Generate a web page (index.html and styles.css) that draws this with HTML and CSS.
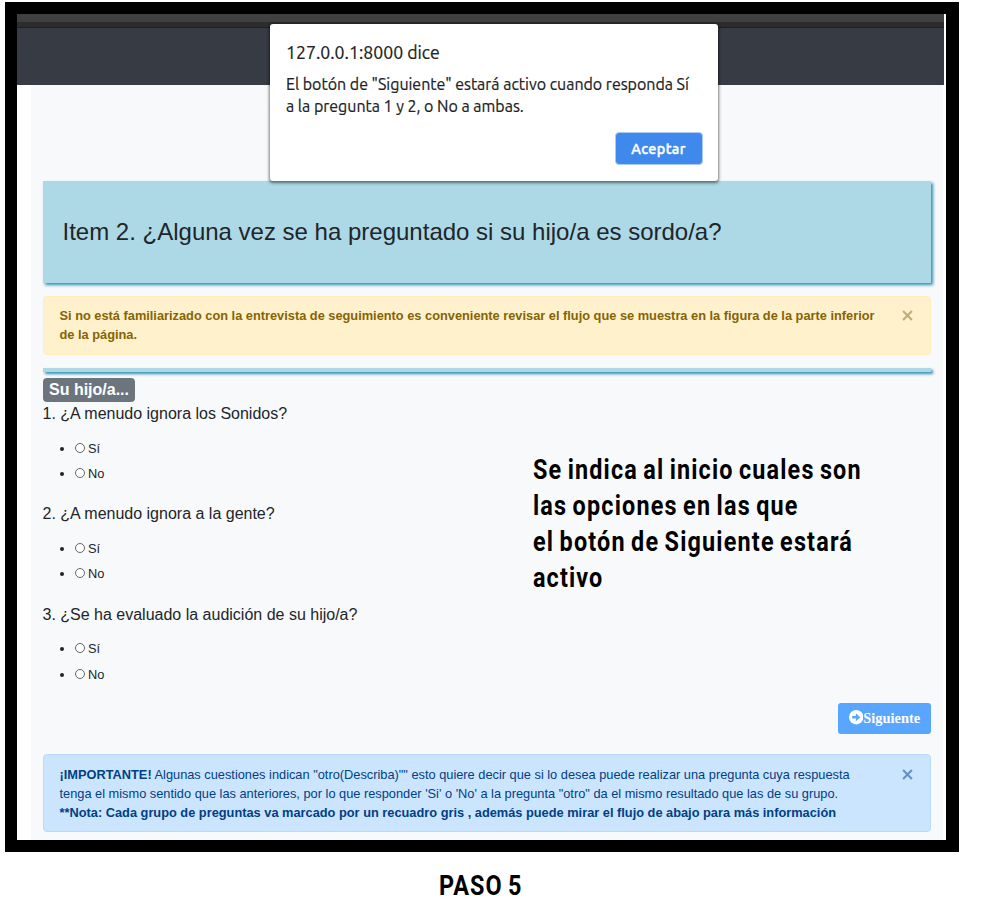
FILE: index.html
```html
<!DOCTYPE html>
<html lang="es">
<head>
<meta charset="utf-8">
<title>Paso 5</title>
<link rel="stylesheet" href="styles.css">
</head>
<body>
<div class="frame">
  <div class="chrome"></div>
  <div class="navbar"></div>
  <main class="content">
    <h1 class="title">Item 2. ¿Alguna vez se ha preguntado si su hijo/a es sordo/a?</h1>
    <div class="alert warning">
      <p><b>Si no está familiarizado con la entrevista de seguimiento es conveniente revisar el flujo que se muestra en la figura de la parte inferior<br>de la página.</b></p>
      <span class="close"><svg viewBox="0 0 10 10"><path d="M1 1L9 9M9 1L1 9"/></svg></span>
    </div>
    <div class="rule"></div>
    <span class="badge">Su hijo/a...</span>
    <section class="question">
      <h2>1. ¿A menudo ignora los Sonidos?</h2>
      <ul><li><label><i class="radio"></i>Sí</label></li><li><label><i class="radio"></i>No</label></li></ul>
    </section>
    <section class="question">
      <h2>2. ¿A menudo ignora a la gente?</h2>
      <ul><li><label><i class="radio"></i>Sí</label></li><li><label><i class="radio"></i>No</label></li></ul>
    </section>
    <section class="question">
      <h2>3. ¿Se ha evaluado la audición de su hijo/a?</h2>
      <ul><li><label><i class="radio"></i>Sí</label></li><li><label><i class="radio"></i>No</label></li></ul>
    </section>
    <div class="actions">
      <button class="next"><svg viewBox="0 0 14 14"><circle cx="7" cy="7" r="7"/><path d="M3.1 5.8H6.7V3.1L11 7L6.7 10.9V8.2H3.1Z"/></svg>Siguiente</button>
    </div>
    <div class="alert info">
      <p><b>¡IMPORTANTE!</b> Algunas cuestiones indican "otro(Describa)"" esto quiere decir que si lo desea puede realizar una pregunta cuya respuesta<br>tenga el mismo sentido que las anteriores, por lo que responder 'Si' o 'No' a la pregunta "otro" da el mismo resultado que las de su grupo.<br><b>**Nota: Cada grupo de preguntas va marcado por un recuadro gris , además puede mirar el flujo de abajo para más información</b></p>
      <span class="close"><svg viewBox="0 0 10 10"><path d="M1 1L9 9M9 1L1 9"/></svg></span>
    </div>
  </main>
</div>
<div class="dialog">
  <div class="dialog-title">127.0.0.1:8000 dice</div>
  <div class="dialog-text"><span>El botón de "Siguiente" estará activo cuando responda Sí</span><span>a la pregunta 1 y 2, o No a ambas.</span></div>
  <button class="accept">Aceptar</button>
</div>
<div class="note"><span class="n1">Se indica al inicio cuales son</span><span class="n2">las opciones en las que</span><span class="n3">el botón de Siguiente estará</span><span class="n4">activo</span></div>
<div class="caption"><span>PASO 5</span></div>
</body>
</html>
```
FILE: styles.css
```css
* { box-sizing: border-box; }
body {
  margin: 0;
  height: 907px;
  overflow: hidden;
  background: #fff;
  color: #212529;
  font-family: "Liberation Sans", Arial, sans-serif;
  position: relative;
}
h1, h2, p, ul { margin: 0; padding: 0; font-weight: 400; }
.frame {
  width: 954px;
  height: 850px;
  margin: 2px 0 0 5px;
  border: 12px solid #000;
  border-right-width: 13px;
  background: #fff;
  display: flow-root;
}
.chrome {
  height: 14px;
  margin-right: 2px;
  background: linear-gradient(#404040 0 8px, #2d2d2d 8px 13px, #1e1f20 13px);
}
.navbar { height: 57px; margin-right: 2px; background: #363b44; }
.content {
  height: 755px;
  margin: 0 3px 0 14px;
  padding: 96px 12px 0;
  background: #f8f9fb;
}
.title {
  height: 102px;
  padding-left: 19.5px;
  background: #add8e6;
  box-shadow: 2px 2px 3px #2e8fb0;
  font-size: 24px;
  line-height: 102px;
  white-space: nowrap;
}
.alert {
  display: flex;
  justify-content: space-between;
  border: 1px solid;
  border-radius: 4px;
  padding: 8.5px 17px 0 15.5px;
  font-size: 12.8px;
  line-height: 19.2px;
  white-space: nowrap;
}
.warning { height: 59px; margin-top: 13px; color: #856404; background: #fff1cc; border-color: #ffeeba; }
.info { height: 78px; margin-top: 20px; padding-top: 9.5px; color: #004085; background: #cce5ff; border-color: #b8daff; }
.close { padding-top: 4.5px; line-height: 0; opacity: .5; }
.info .close { padding-top: 4px; }
.close svg { width: 11px; height: 11px; fill: none; stroke: currentColor; stroke-width: 1.9; }
.warning .close { color: #7f6a28; }
.rule { height: 4px; margin: 13px 0 6px; background: #add8e6; box-shadow: 2px 2px 3px #2e8fb0; }
.badge {
  display: block;
  width: 92px;
  height: 24px;
  border-radius: 4px;
  background: #6c757d;
  color: #fff;
  font-size: 16px;
  font-weight: 700;
  line-height: 24px;
  text-align: center;
}
.question { height: 100.4px; }
.question h2 { font-size: 16px; line-height: 24px; margin-left: -.5px; }
.question ul { list-style: none; padding: 9.3px 0 0 17px; font-size: 12.8px; }
.question li { height: 25.5px; display: flex; align-items: center; }
.question li::before { content: ""; width: 4px; height: 4px; border-radius: 50%; background: #212529; margin: 1px 11px 0 0; }
.question label { display: flex; align-items: center; gap: 3px; }
.radio { width: 10px; height: 10px; margin-top: -1px; border: 1px solid #666; border-radius: 50%; background: #fff; }
.actions { display: flex; justify-content: flex-end; }
.next {
  display: flex;
  align-items: center;
  justify-content: center;
  width: 93px;
  height: 31px;
  padding: 0;
  border: 0;
  border-radius: 3px;
  background: #58a6ff;
  color: #fff;
  font: 700 14.4px "Liberation Serif", serif;
}
.next svg { width: 14.4px; height: 14.4px; fill: #fff; margin-top: -2px; }
.next path { fill: #58a6ff; }
.dialog {
  position: absolute;
  left: 270px;
  top: 24px;
  width: 448px;
  height: 157px;
  padding: 17px 15.5px 0 16px;
  border-radius: 3px;
  background: #fff;
  box-shadow: 0 1px 3px 1px rgba(0, 0, 0, .5);
  font-family: Ubuntu, "Noto Sans", sans-serif;
  color: #202124;
}
.dialog-title { font-size: 17.7px; line-height: 24px; white-space: nowrap; }
.dialog-text { padding-top: 8px; font-size: 16px; line-height: 22px; -webkit-text-stroke: .2px #202124; letter-spacing: -.02px; }
.dialog-title { -webkit-text-stroke: .2px #202124; }
.dialog-text span { display: block; width: max-content; }
.accept {
  display: block;
  width: 88px;
  height: 33px;
  margin: 15px 0 0 auto;
  padding: 0;
  border: 1px solid #a9ccf9;
  border-radius: 4px;
  background: #4089ec;
  color: #fff;
  font: 500 14.4px Ubuntu, "Noto Sans", sans-serif;
  letter-spacing: .4px;
  -webkit-text-stroke: .4px #fff;
}
.note { position: absolute; left: 533px; top: 452px; }
.note span, .caption span {
  display: block;
  width: max-content;
  color: #000;
  font: 700 28.5px/36px Roboto, sans-serif;
  transform: scaleX(.82);
  transform-origin: 0 50%;
  word-spacing: -2px;
}
.note .n1 { letter-spacing: 1.42px; }
.note .n2 { letter-spacing: 1.45px; }
.note .n3 { letter-spacing: 1.45px; }
.note .n4 { letter-spacing: 1.35px; }
.caption { margin: 16px 0 0 438.5px; }
.caption span { letter-spacing: 1.3px; }
```
